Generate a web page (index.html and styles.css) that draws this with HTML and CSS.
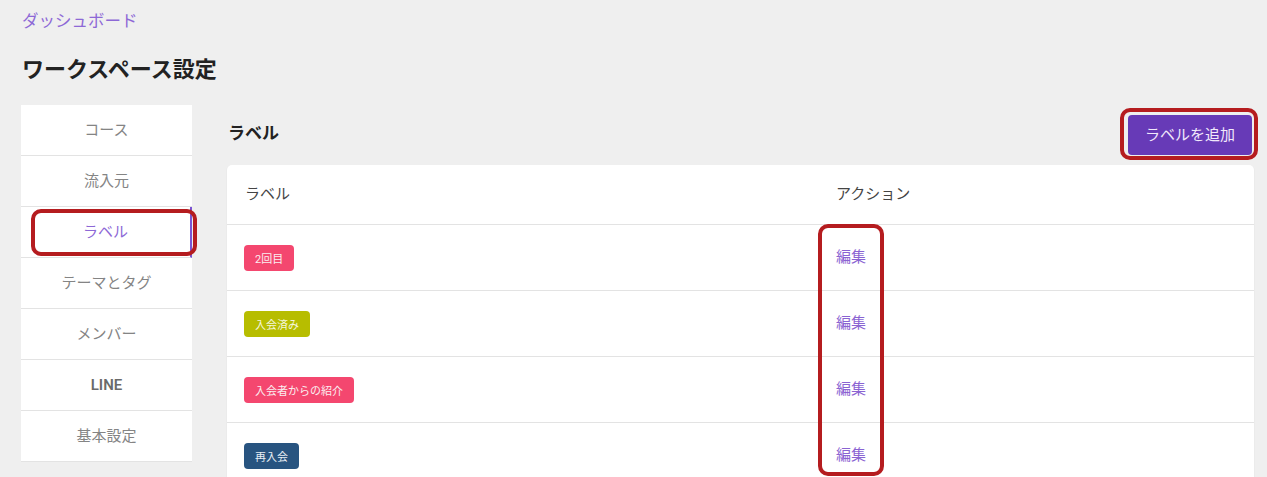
FILE: index.html
```html
<!DOCTYPE html>
<html lang="ja">
<head>
<meta charset="utf-8">
<title>ワークスペース設定</title>
<link rel="stylesheet" href="styles.css">
</head>
<body>
<div class="page">
  <div class="breadcrumb">ダッシュボード</div>
  <h1 class="title">ワークスペース設定</h1>
  <div class="layout">
    <nav class="sidebar">
      <div class="nav-item"><span class="nav-text">コース</span></div>
      <div class="nav-item"><span class="nav-text">流入元</span></div>
      <div class="nav-item active"><span class="nav-text">ラベル</span><span class="mark mark-nav"></span></div>
      <div class="nav-item"><span class="nav-text">テーマとタグ</span></div>
      <div class="nav-item"><span class="nav-text">メンバー</span></div>
      <div class="nav-item latin"><span class="nav-text">LINE</span></div>
      <div class="nav-item"><span class="nav-text">基本設定</span></div>
    </nav>
    <main class="content">
      <div class="content-head">
        <h2 class="heading">ラベル</h2>
        <button class="btn">ラベルを追加<span class="mark mark-btn"></span></button>
      </div>
      <div class="card">
        <div class="row head">
          <div class="cell"><span class="txt">ラベル</span></div>
          <div class="cell"><span class="txt">アクション</span></div>
        </div>
        <div class="row">
          <div class="cell"><span class="badge pink">2回目</span></div>
          <div class="cell"><a class="txt edit">編集</a></div>
        </div>
        <div class="row">
          <div class="cell"><span class="badge olive">入会済み</span></div>
          <div class="cell"><a class="txt edit">編集</a></div>
        </div>
        <div class="row">
          <div class="cell"><span class="badge pink">入会者からの紹介</span></div>
          <div class="cell"><a class="txt edit">編集</a></div>
        </div>
        <div class="row">
          <div class="cell"><span class="badge navy">再入会</span></div>
          <div class="cell"><a class="txt edit">編集</a></div>
        </div>
        <span class="mark mark-col"></span>
      </div>
    </main>
  </div>
</div>
</body>
</html>
```

FILE: styles.css
```css
* { box-sizing: border-box; }
html, body { margin: 0; padding: 0; }
body {
  background: #efefef;
  font-family: Roboto, "Noto Sans CJK JP", sans-serif;
  color: #333;
}
.page {
  padding: 10px 13px 0 21px;
}
.breadcrumb {
  font-size: 16.5px;
  line-height: 24px;
  color: #8d68d6;
  padding-left: 1px;
}
.title {
  margin: 21px 0 20px;
  padding-left: 1px;
  font-size: 22px;
  line-height: 30px;
  font-weight: 700;
  color: #222;
}
.layout {
  display: flex;
  gap: 35px;
  align-items: flex-start;
}
.sidebar {
  width: 171px;
  flex: none;
  background: #fff;
}
.nav-item {
  position: relative;
  height: 51px;
  border-bottom: 1px solid #e3e3e3;
  display: flex;
  align-items: center;
  justify-content: center;
  font-size: 15px;
  color: #848484;
}
.nav-text {
  margin-bottom: 4px;
}
.nav-item.active {
  color: #8d68d6;
  border-right: 2px solid #7a55d4;
}
.nav-item.latin {
  font-weight: 600;
  color: #6a6a6a;
}
.nav-item.latin .nav-text {
  margin-bottom: 0;
}
.content {
  flex: 1;
  min-width: 0;
}
.content-head {
  height: 60px;
  padding-top: 10px;
  display: flex;
  justify-content: space-between;
  align-items: flex-start;
}
.heading {
  margin: 6px 0 0 1px;
  font-size: 17px;
  line-height: 24px;
  font-weight: 700;
  color: #222;
}
.btn {
  position: relative;
  height: 40px;
  width: 124px;
  margin-right: 2px;
  border: none;
  border-radius: 4px;
  background: #673ab7;
  color: #f1e9fb;
  font-family: inherit;
  font-size: 15px;
  padding: 0 0 3px;
}
.card {
  position: relative;
  background: #fff;
  border-radius: 5px;
  box-shadow: 0 1px 2px rgba(0,0,0,0.07);
}
.row {
  display: grid;
  grid-template-columns: 591px 1fr;
  height: 66px;
  border-top: 1px solid #e3e3e3;
}
.row.head {
  height: 59px;
  border-top: none;
}
.cell {
  display: flex;
  align-items: center;
  padding-left: 18px;
  font-size: 15px;
  color: #444;
}
.txt {
  margin-bottom: 4px;
}
.badge {
  display: inline-flex;
  align-items: center;
  height: 26px;
  margin-left: -1px;
  padding: 0 11px;
  border-radius: 4px;
  font-size: 11px;
  color: #fbeef0;
}
.badge.pink { background: #f4476f; }
.badge.olive { background: #b7bd00; color: #f5f6dc; }
.badge.navy { background: #285480; color: #e6edf3; }
.edit {
  color: #8a63d2;
  font-size: 15px;
  cursor: pointer;
}
.mark {
  position: absolute;
  border: 4px solid #b51c1f;
  border-radius: 10px;
  pointer-events: none;
}
.mark-nav {
  left: 10px;
  right: -7px;
  top: 2px;
  bottom: 1px;
}
.mark-btn {
  left: -8px;
  right: -6px;
  top: -7px;
  bottom: -5px;
}
.mark-col {
  left: 591px;
  top: 59px;
  width: 66px;
  height: 252px;
}
```
